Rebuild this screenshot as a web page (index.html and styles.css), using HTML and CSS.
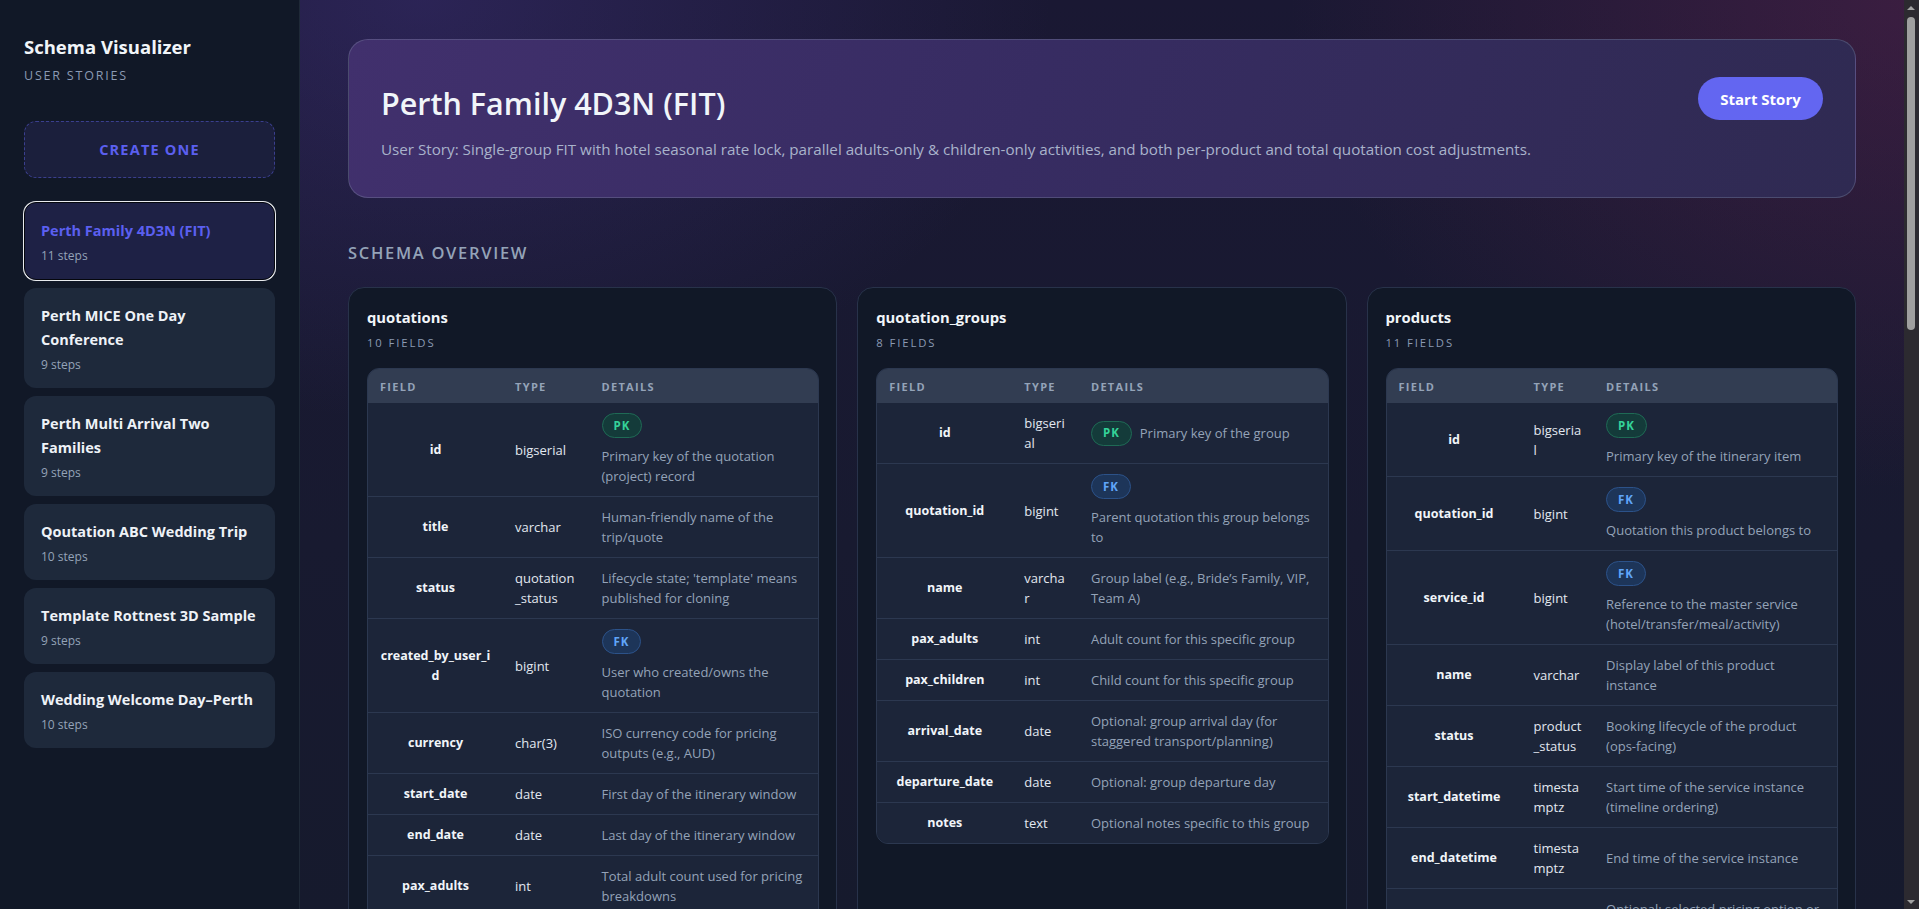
FILE: index.html
```html
<!DOCTYPE html>
<html lang="en">
<head>
<meta charset="utf-8">
<title>Schema Visualizer</title>
<link rel="stylesheet" href="styles.css">
</head>
<body>
<aside class="sidebar">
  <div class="brand">
    <h1 class="brand-title">Schema Visualizer</h1>
    <div class="brand-sub">USER STORIES</div>
  </div>
  <button class="create-btn">CREATE ONE</button>
  <ul class="story-list">
    <li class="story active"><div class="story-title">Perth Family 4D3N (FIT)</div><div class="story-steps">11 steps</div></li>
    <li class="story"><div class="story-title">Perth MICE One Day Conference</div><div class="story-steps">9 steps</div></li>
    <li class="story"><div class="story-title">Perth Multi Arrival Two Families</div><div class="story-steps">9 steps</div></li>
    <li class="story"><div class="story-title">Qoutation ABC Wedding Trip</div><div class="story-steps">10 steps</div></li>
    <li class="story"><div class="story-title">Template Rottnest 3D Sample</div><div class="story-steps">9 steps</div></li>
    <li class="story"><div class="story-title">Wedding Welcome Day–Perth</div><div class="story-steps">10 steps</div></li>
  </ul>
</aside>
<main class="main">
  <section class="hero">
    <div class="hero-text">
      <h2 class="hero-title">Perth Family 4D3N (FIT)</h2>
      <p class="hero-desc">User Story: Single-group FIT with hotel seasonal rate lock, parallel adults-only &amp; children-only activities, and both per-product and total quotation cost adjustments.</p>
    </div>
    <button class="start-btn">Start Story</button>
  </section>

  <h3 class="section-title">SCHEMA OVERVIEW</h3>

  <div class="schema-grid">
    <!-- quotations -->
    <div class="table-card">
      <div class="tc-title">quotations</div>
      <div class="tc-count">10 FIELDS</div>
      <div class="tbl-wrap">
        <table class="tbl">
          <colgroup><col class="c-field"><col class="c-type-q"><col></colgroup>
          <thead><tr><th>FIELD</th><th>TYPE</th><th>DETAILS</th></tr></thead>
          <tbody>
            <tr><td class="f">id</td><td class="t">bigserial</td><td><div class="d"><span class="badge pk">PK</span><span class="desc">Primary key of the quotation (project) record</span></div></td></tr>
            <tr><td class="f">title</td><td class="t">varchar</td><td><div class="d"><span class="desc">Human-friendly name of the trip/quote</span></div></td></tr>
            <tr><td class="f">status</td><td class="t">quotation_status</td><td><div class="d"><span class="desc">Lifecycle state; 'template' means published for cloning</span></div></td></tr>
            <tr><td class="f">created_by_user_id</td><td class="t">bigint</td><td><div class="d"><span class="badge fk">FK</span><span class="desc">User who created/owns the quotation</span></div></td></tr>
            <tr><td class="f">currency</td><td class="t">char(3)</td><td><div class="d"><span class="desc">ISO currency code for pricing outputs (e.g., AUD)</span></div></td></tr>
            <tr><td class="f">start_date</td><td class="t">date</td><td><div class="d"><span class="desc">First day of the itinerary window</span></div></td></tr>
            <tr><td class="f">end_date</td><td class="t">date</td><td><div class="d"><span class="desc">Last day of the itinerary window</span></div></td></tr>
            <tr><td class="f">pax_adults</td><td class="t">int</td><td><div class="d"><span class="desc">Total adult count used for pricing breakdowns</span></div></td></tr>
            <tr><td class="f">pax_children</td><td class="t">int</td><td><div class="d"><span class="desc">Total child count used for pricing breakdowns</span></div></td></tr>
            <tr><td class="f">notes</td><td class="t">text</td><td><div class="d"><span class="desc">Internal notes for the quotation</span></div></td></tr>
          </tbody>
        </table>
      </div>
    </div>

    <!-- quotation_groups -->
    <div class="table-card">
      <div class="tc-title">quotation_groups</div>
      <div class="tc-count">8 FIELDS</div>
      <div class="tbl-wrap">
        <table class="tbl">
          <colgroup><col class="c-field"><col class="c-type-g"><col></colgroup>
          <thead><tr><th>FIELD</th><th>TYPE</th><th>DETAILS</th></tr></thead>
          <tbody>
            <tr><td class="f">id</td><td class="t">bigserial</td><td><div class="d"><span class="badge pk">PK</span><span class="desc">Primary key of the group</span></div></td></tr>
            <tr><td class="f">quotation_id</td><td class="t">bigint</td><td><div class="d"><span class="badge fk">FK</span><span class="desc">Parent quotation this group belongs to</span></div></td></tr>
            <tr><td class="f">name</td><td class="t">varchar</td><td><div class="d"><span class="desc">Group label (e.g., Bride’s Family, VIP, Team A)</span></div></td></tr>
            <tr><td class="f">pax_adults</td><td class="t">int</td><td><div class="d"><span class="desc">Adult count for this specific group</span></div></td></tr>
            <tr><td class="f">pax_children</td><td class="t">int</td><td><div class="d"><span class="desc">Child count for this specific group</span></div></td></tr>
            <tr><td class="f">arrival_date</td><td class="t">date</td><td><div class="d"><span class="desc">Optional: group arrival day (for staggered transport/planning)</span></div></td></tr>
            <tr><td class="f">departure_date</td><td class="t">date</td><td><div class="d"><span class="desc">Optional: group departure day</span></div></td></tr>
            <tr><td class="f">notes</td><td class="t">text</td><td><div class="d"><span class="desc">Optional notes specific to this group</span></div></td></tr>
          </tbody>
        </table>
      </div>
    </div>

    <!-- products -->
    <div class="table-card">
      <div class="tc-title">products</div>
      <div class="tc-count">11 FIELDS</div>
      <div class="tbl-wrap">
        <table class="tbl">
          <colgroup><col class="c-field"><col class="c-type-p"><col></colgroup>
          <thead><tr><th>FIELD</th><th>TYPE</th><th>DETAILS</th></tr></thead>
          <tbody>
            <tr><td class="f">id</td><td class="t">bigserial</td><td><div class="d"><span class="badge pk">PK</span><span class="desc">Primary key of the itinerary item</span></div></td></tr>
            <tr><td class="f">quotation_id</td><td class="t">bigint</td><td><div class="d"><span class="badge fk">FK</span><span class="desc">Quotation this product belongs to</span></div></td></tr>
            <tr><td class="f">service_id</td><td class="t">bigint</td><td><div class="d"><span class="badge fk">FK</span><span class="desc">Reference to the master service (hotel/transfer/meal/activity)</span></div></td></tr>
            <tr><td class="f">name</td><td class="t">varchar</td><td><div class="d"><span class="desc">Display label of this product instance</span></div></td></tr>
            <tr><td class="f">status</td><td class="t">product_status</td><td><div class="d"><span class="desc">Booking lifecycle of the product (ops-facing)</span></div></td></tr>
            <tr><td class="f">start_datetime</td><td class="t">timestamptz</td><td><div class="d"><span class="desc">Start time of the service instance (timeline ordering)</span></div></td></tr>
            <tr><td class="f">end_datetime</td><td class="t">timestamptz</td><td><div class="d"><span class="desc">End time of the service instance</span></div></td></tr>
            <tr><td class="f">pricing_option</td><td class="t">varchar</td><td><div class="d"><span class="desc">Optional: selected pricing option or rate plan</span></div></td></tr>
            <tr><td class="f">quantity</td><td class="t">int</td><td><div class="d"><span class="desc">Number of units booked</span></div></td></tr>
            <tr><td class="f">unit_cost</td><td class="t">numeric</td><td><div class="d"><span class="desc">Cost per unit before adjustments</span></div></td></tr>
            <tr><td class="f">notes</td><td class="t">text</td><td><div class="d"><span class="desc">Operational notes for this product</span></div></td></tr>
          </tbody>
        </table>
      </div>
    </div>
  </div>
</main>
<div class="scroll-rail" aria-hidden="true">
  <span class="rail-arrow up"></span>
  <div class="rail-track"><div class="rail-thumb"></div></div>
  <span class="rail-arrow down"></span>
</div>
</body>
</html>
```

FILE: styles.css
```css
* { box-sizing: border-box; }

html {
  margin: 0;
  padding: 0;
  background: #161a2d;
}

body {
  margin: 0;
  padding: 0;
  font-family: "Open Sans", "Noto Sans", sans-serif;
  color: #e2e8f0;
  display: flex;
  align-items: flex-start;
  min-height: 100vh;
  background:
    radial-gradient(ellipse 900px 600px at 22% 0%, rgba(76, 58, 150, 0.35), transparent 70%),
    radial-gradient(ellipse 900px 700px at 100% 0%, rgba(120, 40, 90, 0.35), transparent 70%),
    linear-gradient(180deg, #1a1833 0%, #181a30 60%, #161a2d 100%);
  background-attachment: fixed;
}

/* ---------- sidebar ---------- */
.sidebar {
  position: sticky;
  top: 0;
  flex: 0 0 300px;
  width: 300px;
  height: 100vh;
  background: #111827;
  border-right: 1px solid #1f2937;
  padding: 35px 24px 24px 24px;
}

.brand-title {
  margin: 0;
  font-size: 18.5px;
  line-height: 24px;
  font-weight: 700;
  color: #f1f5f9;
}

.brand-sub {
  margin-top: 9px;
  font-size: 12.5px;
  line-height: 16px;
  letter-spacing: 1.8px;
  color: #8b9ab3;
}

.create-btn {
  display: block;
  width: 100%;
  height: 57px;
  margin-top: 37px;
  border: 1px dashed rgba(99, 102, 241, 0.45);
  border-radius: 12px;
  background: #1b1f3c;
  color: #5b5ff0;
  font-family: inherit;
  font-size: 14.5px;
  font-weight: 700;
  letter-spacing: 1.2px;
}

.story-list {
  list-style: none;
  margin: 24px 0 0 0;
  padding: 0;
  display: flex;
  flex-direction: column;
  gap: 8px;
}

.story {
  background: #1e293b;
  border-radius: 12px;
  padding: 16px 17px 14px 17px;
}

.story.active {
  background: #1e2145;
  border: 1px solid #05070d;
  box-shadow: 0 0 0 1px #e8eaee;
  padding: 16px 16px 14px 16px;
}

.story-title {
  font-size: 14.5px;
  line-height: 24px;
  font-weight: 700;
  color: #eef2f7;
}

.story.active .story-title { color: #5b5ff0; }

.story-steps {
  margin-top: 4px;
  font-size: 12px;
  line-height: 18px;
  color: #94a3b8;
}

/* ---------- main ---------- */
.main {
  flex: 1 1 auto;
  min-width: 0;
  padding: 39px 48px 60px 48px;
}

.hero {
  display: flex;
  justify-content: space-between;
  align-items: flex-start;
  gap: 24px;
  padding: 37px 32px 37px 32px;
  border-radius: 20px;
  border: 1px solid rgba(148, 163, 184, 0.28);
  background: linear-gradient(110deg, #41306d 0%, #372c62 45%, #2f2a52 100%);
}

.hero-title {
  margin: 7px 0 0 0;
  font-size: 30.5px;
  line-height: 38px;
  font-weight: 600;
  color: #f1f5f9;
}

.hero-desc {
  margin: 16px 0 0 0;
  font-size: 15.2px;
  line-height: 22px;
  color: #a9b3cb;
}

.start-btn {
  flex: 0 0 auto;
  height: 43px;
  padding: 0 22px;
  border: none;
  border-radius: 999px;
  background: #6366f1;
  color: #ffffff;
  font-family: inherit;
  font-size: 15px;
  font-weight: 700;
}

.section-title {
  margin: 44px 0 23px 0;
  font-size: 16.5px;
  line-height: 22px;
  font-weight: 600;
  letter-spacing: 1.7px;
  color: #94a3b8;
}

.schema-grid {
  display: grid;
  grid-template-columns: repeat(3, 1fr);
  gap: 20px;
}

.table-card {
  background: #111827;
  border: 1px solid #28324a;
  border-radius: 16px;
  padding: 18px 17px 24px 18px;
}

.tc-title {
  font-size: 14.8px;
  line-height: 22px;
  font-weight: 700;
  color: #f1f5f9;
}

.tc-count {
  margin-top: 7px;
  font-size: 11.3px;
  line-height: 16px;
  letter-spacing: 1.9px;
  color: #8b9ab3;
}

.tbl-wrap {
  margin-top: 17px;
  border: 1px solid #2c3850;
  border-radius: 12px;
  overflow: hidden;
  background: #1c2539;
}

.tbl {
  width: 100%;
  border-collapse: collapse;
  table-layout: fixed;
}

.c-field { width: 30%; }
.c-type-q { width: 19.2%; }
.c-type-g { width: 14.8%; }
.c-type-p { width: 16.1%; }

.tbl th {
  height: 34px;
  padding: 0 12px;
  text-align: left;
  background: #323d52;
  font-size: 11px;
  font-weight: 700;
  letter-spacing: 1.3px;
  color: #94a3b8;
}

.tbl td {
  padding: 10px 12px;
  border-top: 1px solid #2c3850;
  font-size: 13px;
  line-height: 20px;
  vertical-align: middle;
  background: #1c2539;
}

.tbl thead + tbody tr:first-child td { border-top: none; }

.tbl td.f {
  text-align: center;
  font-weight: 700;
  font-size: 12.5px;
  color: #f1f5f9;
  word-break: break-all;
}

.tbl td.t {
  color: #e2e8f0;
  word-break: break-all;
}

.d {
  display: flex;
  flex-wrap: wrap;
  align-items: center;
  column-gap: 8px;
  row-gap: 8px;
}

.desc { color: #94a3b8; }

.badge {
  display: inline-flex;
  align-items: center;
  justify-content: center;
  height: 25px;
  padding: 0 11px;
  border-radius: 999px;
  font-size: 11.5px;
  font-weight: 700;
  letter-spacing: 1px;
}

.badge.pk {
  background: #143b3a;
  border: 1px solid #1f6a55;
  color: #34d399;
}

.badge.fk {
  background: #1d3559;
  border: 1px solid #2c5289;
  color: #60a5fa;
}

/* ---------- window scroll rail ---------- */
.scroll-rail {
  position: sticky;
  top: 0;
  flex: 0 0 15px;
  width: 15px;
  height: 100vh;
  background: #2c2a30;
  display: flex;
  flex-direction: column;
  align-items: center;
}

.rail-arrow {
  flex: 0 0 15px;
  width: 15px;
  display: flex;
  align-items: center;
  justify-content: center;
}

.rail-arrow::before {
  content: "";
  width: 0;
  height: 0;
  border-left: 4px solid transparent;
  border-right: 4px solid transparent;
}

.rail-arrow.up::before { border-bottom: 4px solid #a3a3a3; }
.rail-arrow.down::before { border-top: 4px solid #a3a3a3; }

.rail-track {
  flex: 1 1 auto;
  width: 100%;
  display: flex;
  justify-content: center;
  padding-top: 2px;
}

.rail-thumb {
  width: 8px;
  height: 313px;
  border-radius: 4px;
  background: #9f9f9f;
}
```
